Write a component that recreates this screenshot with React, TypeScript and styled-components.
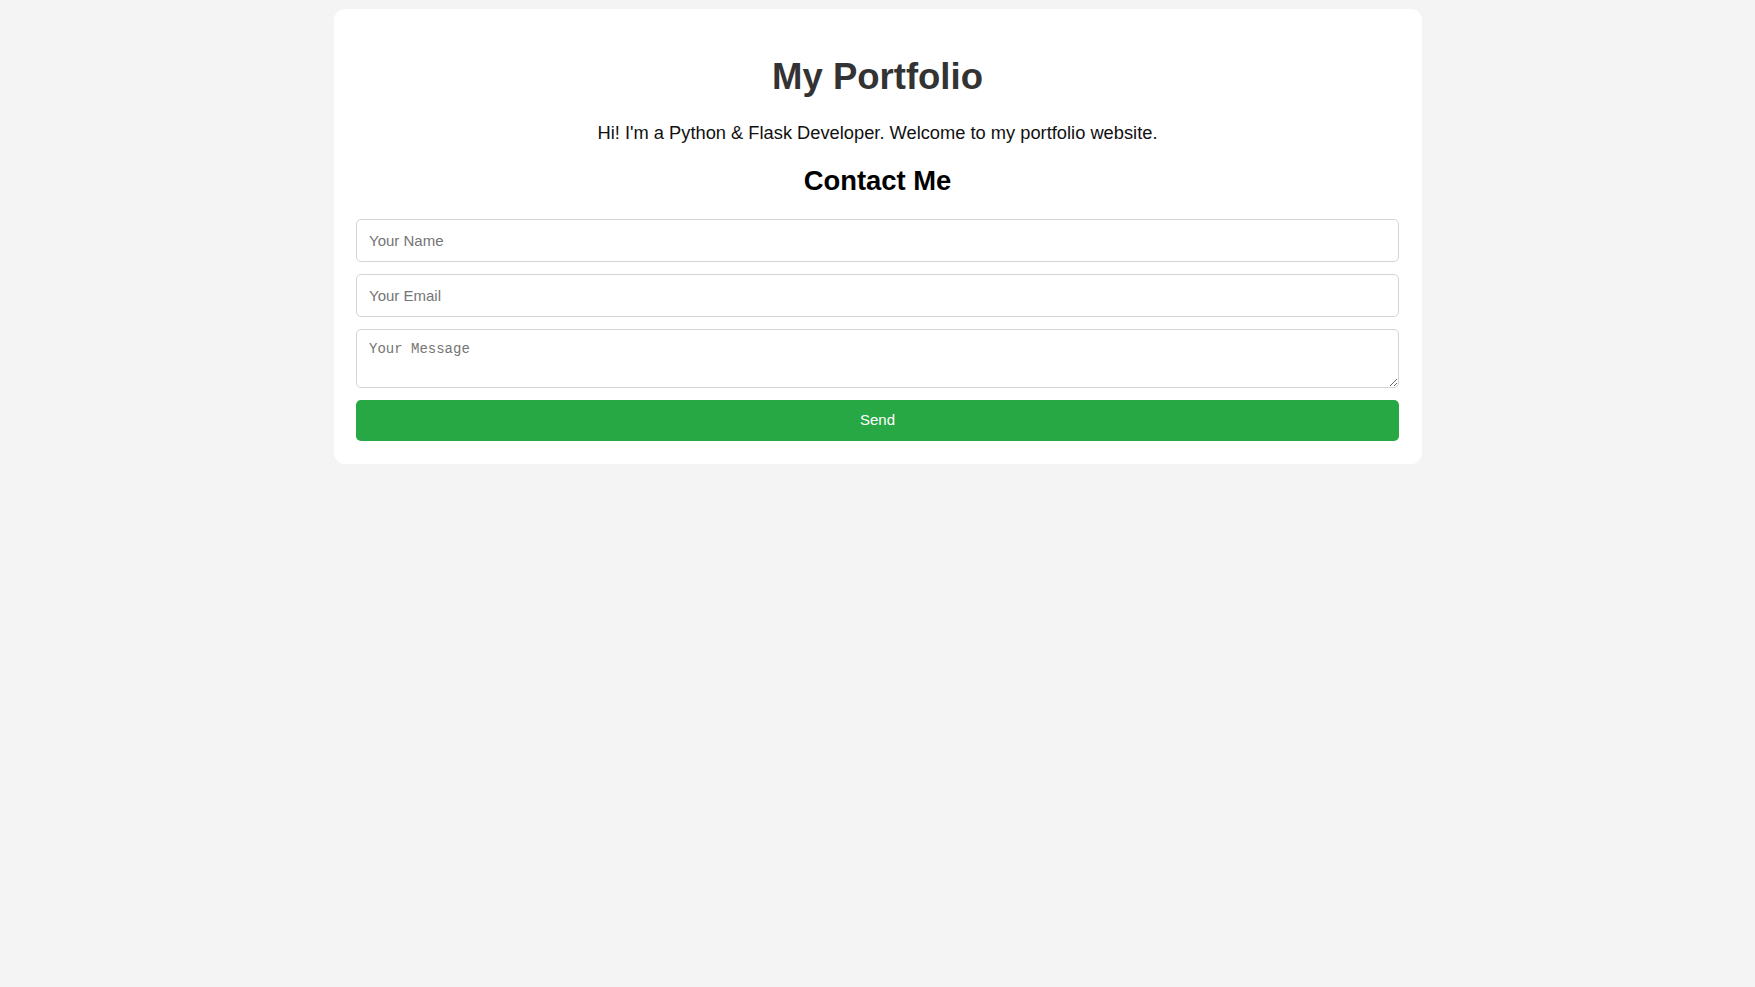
import React from "react";
import styled, { createGlobalStyle } from "styled-components";

const GlobalStyle = createGlobalStyle`
  html, body {
    margin: 0;
    padding: 0;
    background: #f4f4f4;
  }
  body {
    font-family: "Liberation Sans", Arial, sans-serif;
    padding: 9px 0;
  }
  * { box-sizing: border-box; }
`;

const Card = styled.main`
  width: 1088px;
  margin: 0 auto;
  background: #ffffff;
  border-radius: 11px;
  padding: 22px 22.5px 22.5px;
  display: flex;
  flex-direction: column;
  align-items: stretch;
`;

const Title = styled.h1`
  margin: 26px 0 0;
  font-size: 36.5px;
  line-height: 40px;
  font-weight: 700;
  color: #333333;
  text-align: center;
`;

const Intro = styled.p`
  margin: 26px 0 0;
  font-size: 18.3px;
  line-height: 20px;
  color: #111111;
  text-align: center;
`;

const SectionTitle = styled.h2`
  margin: 23px 0 0;
  font-size: 27.4px;
  line-height: 30px;
  font-weight: 700;
  color: #000000;
  text-align: center;
`;

const Form = styled.form`
  margin-top: 23px;
  display: flex;
  flex-direction: column;
  gap: 12px;
`;

const Field = styled.input`
  display: block;
  width: 100%;
  height: 43px;
  padding: 0 12px;
  font-family: "Liberation Sans", Arial, sans-serif;
  font-size: 15px;
  color: #222;
  border: 1px solid #d4d4d4;
  border-radius: 5px;
  background: #fff;
  outline: none;
  &::placeholder { color: #757575; }
`;

const MessageArea = styled.textarea`
  display: block;
  width: 100%;
  height: 59px;
  padding: 11px 12px;
  font-family: "Liberation Mono", "Courier New", monospace;
  font-size: 14px;
  line-height: 17.5px;
  color: #222;
  border: 1px solid #d4d4d4;
  border-radius: 5px;
  background: #fff;
  outline: none;
  resize: vertical;
  &::placeholder { color: #757575; }
`;

const SendButton = styled.button`
  display: block;
  width: 100%;
  height: 41px;
  border: none;
  border-radius: 5px;
  background: #28a745;
  color: #ffffff;
  font-family: "Liberation Sans", Arial, sans-serif;
  font-size: 15px;
  line-height: 17px;
  padding: 0 0 2px;
  cursor: pointer;
`;

export default function App() {
  return (
    <>
      <GlobalStyle />
      <Card>
        <Title>My Portfolio</Title>
        <Intro>Hi! I'm a Python &amp; Flask Developer. Welcome to my portfolio website.</Intro>
        <SectionTitle>Contact Me</SectionTitle>
        <Form onSubmit={(e) => e.preventDefault()}>
          <Field type="text" placeholder="Your Name" />
          <Field type="email" placeholder="Your Email" />
          <MessageArea placeholder="Your Message" rows={2} />
          <SendButton type="submit">Send</SendButton>
        </Form>
      </Card>
    </>
  );
}
